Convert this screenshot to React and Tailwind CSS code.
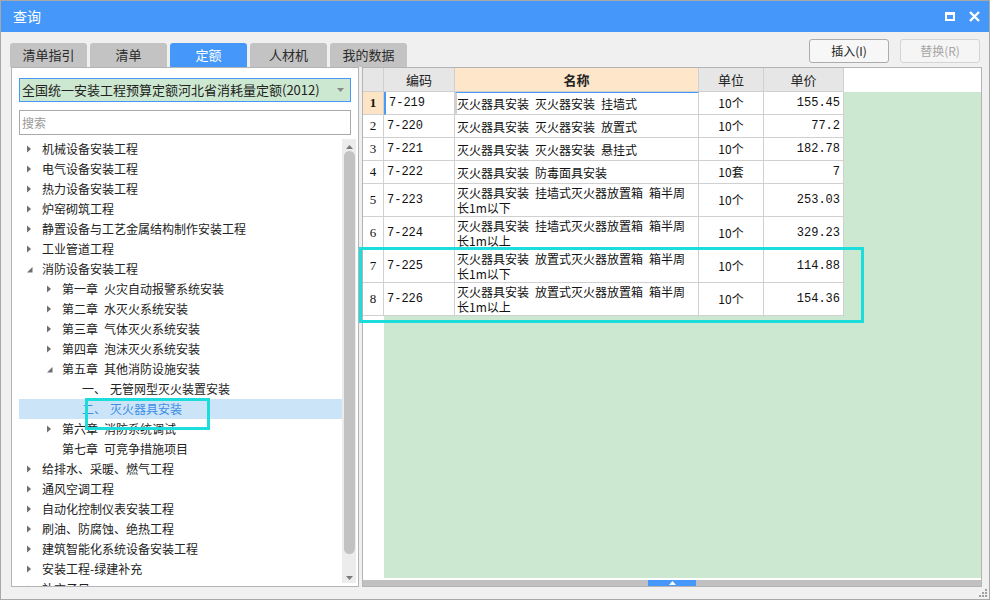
import React from 'react';

const cjk = { fontFamily: '"Noto Sans CJK SC", "Noto Sans", sans-serif' };
const mono = { fontFamily: '"Liberation Mono", "Noto Sans CJK SC", monospace' };

const tabs = ['清单指引', '清单', '定额', '人材机', '我的数据'];

const tree = [
  { l: 0, t: '机械设备安装工程', a: 'r' },
  { l: 0, t: '电气设备安装工程', a: 'r' },
  { l: 0, t: '热力设备安装工程', a: 'r' },
  { l: 0, t: '炉窑砌筑工程', a: 'r' },
  { l: 0, t: '静置设备与工艺金属结构制作安装工程', a: 'r' },
  { l: 0, t: '工业管道工程', a: 'r' },
  { l: 0, t: '消防设备安装工程', a: 'd' },
  { l: 1, t: '第一章\u2002火灾自动报警系统安装', a: 'r' },
  { l: 1, t: '第二章\u2002水灭火系统安装', a: 'r' },
  { l: 1, t: '第三章\u2002气体灭火系统安装', a: 'r' },
  { l: 1, t: '第四章\u2002泡沫灭火系统安装', a: 'r' },
  { l: 1, t: '第五章\u2002其他消防设施安装', a: 'd' },
  { l: 2, n: '一、', t: '无管网型灭火装置安装' },
  { l: 2, n: '二、', t: '灭火器具安装', sel: true },
  { l: 1, t: '第六章\u2002消防系统调试', a: 'r' },
  { l: 1, t: '第七章\u2002可竞争措施项目' },
  { l: 0, t: '给排水、采暖、燃气工程', a: 'r' },
  { l: 0, t: '通风空调工程', a: 'r' },
  { l: 0, t: '自动化控制仪表安装工程', a: 'r' },
  { l: 0, t: '刷油、防腐蚀、绝热工程', a: 'r' },
  { l: 0, t: '建筑智能化系统设备安装工程', a: 'r' },
  { l: 0, t: '安装工程-绿建补充', a: 'r' },
  { l: 0, t: '补充子目', a: 'r' },
];

const S = '\u2002';
const rows = [
  { n: 1, c: '7-219', name: [`灭火器具安装${S}灭火器安装${S}挂墙式`], u: '10个', p: '155.45' },
  { n: 2, c: '7-220', name: [`灭火器具安装${S}灭火器安装${S}放置式`], u: '10个', p: '77.2' },
  { n: 3, c: '7-221', name: [`灭火器具安装${S}灭火器安装${S}悬挂式`], u: '10个', p: '182.78' },
  { n: 4, c: '7-222', name: [`灭火器具安装${S}防毒面具安装`], u: '10套', p: '7' },
  { n: 5, c: '7-223', name: [`灭火器具安装${S}挂墙式灭火器放置箱${S}箱半周`, '长1m以下'], u: '10个', p: '253.03' },
  { n: 6, c: '7-224', name: [`灭火器具安装${S}挂墙式灭火器放置箱${S}箱半周`, '长1m以上'], u: '10个', p: '329.23' },
  { n: 7, c: '7-225', name: [`灭火器具安装${S}放置式灭火器放置箱${S}箱半周`, '长1m以下'], u: '10个', p: '114.88' },
  { n: 8, c: '7-226', name: [`灭火器具安装${S}放置式灭火器放置箱${S}箱半周`, '长1m以上'], u: '10个', p: '154.36' },
];

function Arrow({ type }) {
  if (type === 'r')
    return (
      <svg width="6" height="8" viewBox="0 0 6 8">
        <path d="M1 0.5 L5 4 L1 7.5 Z" fill="#6e6e6e" />
      </svg>
    );
  if (type === 'd')
    return (
      <svg width="7" height="7" viewBox="0 0 7 7">
        <path d="M6.5 1 L6.5 6.5 L1 6.5 Z" fill="#6e6e6e" />
      </svg>
    );
  return null;
}

function TreeRow({ item }) {
  const pad = { 0: 'pl-[7px]', 1: 'pl-[27px]', 2: 'pl-[63px]' }[item.l];
  return (
    <div
      className={`h-[20px] flex items-center shrink-0 ${pad} ${item.sel ? 'bg-[#cce4f8] text-[#3d8ee6]' : 'text-[#222]'}`}
    >
      {item.l < 2 && (
        <span className="w-[16px] flex items-center">
          <Arrow type={item.a} />
        </span>
      )}
      {item.n && <span className="w-[28px]">{item.n}</span>}
      <span className="whitespace-pre">{item.t}</span>
    </div>
  );
}

function Cell({ w, className = '', children, style }) {
  return (
    <div className={`shrink-0 border-r border-b border-[#d0d0d0] ${w} ${className}`} style={style}>
      {children}
    </div>
  );
}

export default function App() {
  return (
    <div className="relative w-[990px] h-[600px] bg-[#f0f0f0] border border-[#a8a8a8] flex flex-col overflow-hidden text-[12px]" style={cjk}>
      {/* title bar */}
      <div className="h-[31px] bg-[#4598f9] flex items-center pl-[12px] pr-[9px] shrink-0">
        <span className="text-white text-[14px]">查询</span>
        <div className="ml-auto flex items-center gap-[14px]">
          <div className="w-[10px] h-[9px] border-2 border-white border-t-[3px]" />
          <svg width="11" height="11" viewBox="0 0 11 11">
            <path d="M1 1 L10 10 M10 1 L1 10" stroke="white" strokeWidth="2.4" />
          </svg>
        </div>
      </div>

      {/* tabs + buttons */}
      <div className="h-[35px] flex pl-[9px] pr-[9px] shrink-0">
        <div className="flex gap-[3px] self-end">
          {tabs.map((t) => (
            <div
              key={t}
              className={`w-[77px] h-[24px] rounded-t-[3px] flex items-center justify-center text-[13px] ${
                t === '定额' ? 'bg-[#4598f9] text-white' : 'bg-[#c3c3c3] text-[#2a2a2a]'
              }`}
            >
              {t}
            </div>
          ))}
        </div>
        <div className="ml-auto flex gap-[11px] mt-[7px] self-start">
          <div className="w-[80px] h-[24px] border border-[#acacac] rounded-[3px] bg-[#f7f7f7] flex items-center justify-center text-[#222]">
            插入(I)
          </div>
          <div className="w-[80px] h-[24px] border border-[#d4d4d4] rounded-[3px] bg-[#f5f5f5] flex items-center justify-center text-[#a6a6a6]">
            替换(R)
          </div>
        </div>
      </div>

      {/* panels */}
      <div className="flex gap-[3px] pl-[10px] h-[520px] shrink-0">
        {/* left */}
        <div className="w-[348px] h-full bg-white border border-[#b4b4b4] flex flex-col">
          <div className="px-[7px] pt-[10px]">
            <div className="h-[24px] bg-[#cde8d0] border border-[#4598f9] flex items-center pl-[2px] pr-[6px]">
              <span className="text-[#222] text-[13px] whitespace-nowrap">全国统一安装工程预算定额河北省消耗量定额(2012)</span>
              <svg className="ml-auto" width="7" height="4" viewBox="0 0 7 4">
                <path d="M0 0 L7 0 L3.5 4 Z" fill="#8a8a8a" />
              </svg>
            </div>
            <div className="h-[25px] mt-[8px] border border-[#a9a9a9] flex items-center pl-[2px] text-[#9a9a9a] text-[12px]">
              搜索
            </div>
          </div>
          <div className="flex-1 flex pl-[7px] pr-[2px] mt-[4px] overflow-hidden">
            <div className="flex-1 flex flex-col overflow-hidden text-[12px]">
              {tree.map((it, i) => (
                <TreeRow key={i} item={it} />
              ))}
            </div>
            <div className="w-[14px] bg-[#ececec] flex flex-col items-center pt-[6px] pb-[3px] mb-[3px]">
              <svg width="7" height="4" viewBox="0 0 7 4">
                <path d="M3.5 0 L7 4 L0 4 Z" fill="#7a7a7a" />
              </svg>
              <div className="w-[11px] flex-1 bg-[#c2c2c2] rounded-full mt-[2px] mb-[22px]" />
              <svg width="7" height="4" viewBox="0 0 7 4">
                <path d="M0 0 L7 0 L3.5 4 Z" fill="#7a7a7a" />
              </svg>
            </div>
          </div>
        </div>

        {/* right */}
        <div className="w-[620px] h-full bg-white border border-[#b4b4b4] flex flex-col">
          {/* header */}
          <div className="flex h-[24px] shrink-0 text-[13px] text-[#222]">
            <Cell w="w-[21px]" className="bg-[#e6e6e6]" />
            <Cell w="w-[71px]" className="bg-[#e6e6e6] flex items-center justify-center">编码</Cell>
            <Cell w="w-[244px]" className="bg-[#fde6c9] flex items-center justify-center font-bold">名称</Cell>
            <Cell w="w-[65px]" className="bg-[#e6e6e6] flex items-center justify-center">单位</Cell>
            <Cell w="w-[80px]" className="bg-[#e6e6e6] flex items-center justify-center">单价</Cell>
            <div className="flex-1 bg-white" />
          </div>
          {/* body */}
          <div className="flex-1 flex flex-col">
            {rows.map((r) => {
              const two = r.name.length > 1;
              const h = two ? 'h-[33px]' : 'h-[23px]';
              const first = r.n === 1;
              return (
                <div key={r.n} className={`flex ${h} shrink-0 text-[#111]`}>
                  <Cell
                    w="w-[21px]"
                    className={`flex items-center justify-center ${first ? 'bg-[#fde4c4] font-bold' : 'bg-white'}`}
                    style={{ fontFamily: '"Liberation Serif", serif', fontSize: 13 }}
                  >
                    {r.n}
                  </Cell>
                  <Cell
                    w="w-[71px]"
                    className={`bg-white flex items-center pl-[3px] ${first ? 'border-l-2 border-l-[#4a9af5]' : ''}`}
                    style={mono}
                  >
                    {r.c}
                  </Cell>
                  <Cell
                    w="w-[244px]"
                    className={`bg-white leading-[15px] flex flex-col ${two ? 'pt-[1px] pl-[2px]' : 'justify-center pl-[2px]'} ${
                      first ? 'border-2 border-[#7c7c7c] border-t-[#4a9af5] border-t !pl-0' : ''
                    }`}
                  >
                    {r.name.map((ln, i) => (
                      <span key={i} className="whitespace-pre">{ln}</span>
                    ))}
                  </Cell>
                  <Cell w="w-[65px]" className="bg-white flex items-center justify-center">{r.u}</Cell>
                  <Cell w="w-[80px]" className="bg-white flex items-center justify-end pr-[3px]" style={mono}>
                    {r.p}
                  </Cell>
                  <div className="flex-1 bg-[#cde8d0]" />
                </div>
              );
            })}
            <div className="flex-1 flex">
              <div className="w-[21px] bg-white" />
              <div className="flex-1 bg-[#cde8d0]" />
            </div>
            <div className="h-[2px] bg-white" />
            <div className="h-[6px] bg-[#c0c0c0] flex justify-center">
              <div className="w-[48px] h-full bg-[#4598f9] flex items-center justify-center">
                <svg width="7" height="4" viewBox="0 0 7 4">
                  <path d="M3.5 0 L7 4 L0 4 Z" fill="white" />
                </svg>
              </div>
            </div>
          </div>
        </div>
      </div>

      {/* resize grip */}
      <div className="absolute right-[2px] bottom-[2px] grid grid-cols-3 gap-[1px]">
        {[0, 0, 1, 0, 1, 1, 1, 1, 1].map((v, i) => (
          <div key={i} className={`w-[2px] h-[2px] ${v ? 'bg-[#a0a0a0]' : ''}`} />
        ))}
      </div>

      {/* highlight boxes */}
      <div className="absolute left-[84px] top-[397px] w-[125px] h-[32px] border-[3px] border-[#1ddcdc]" />
      <div className="absolute left-[358px] top-[246px] w-[505px] h-[76px] border-[3px] border-[#1ddcdc]" />
    </div>
  );
}
